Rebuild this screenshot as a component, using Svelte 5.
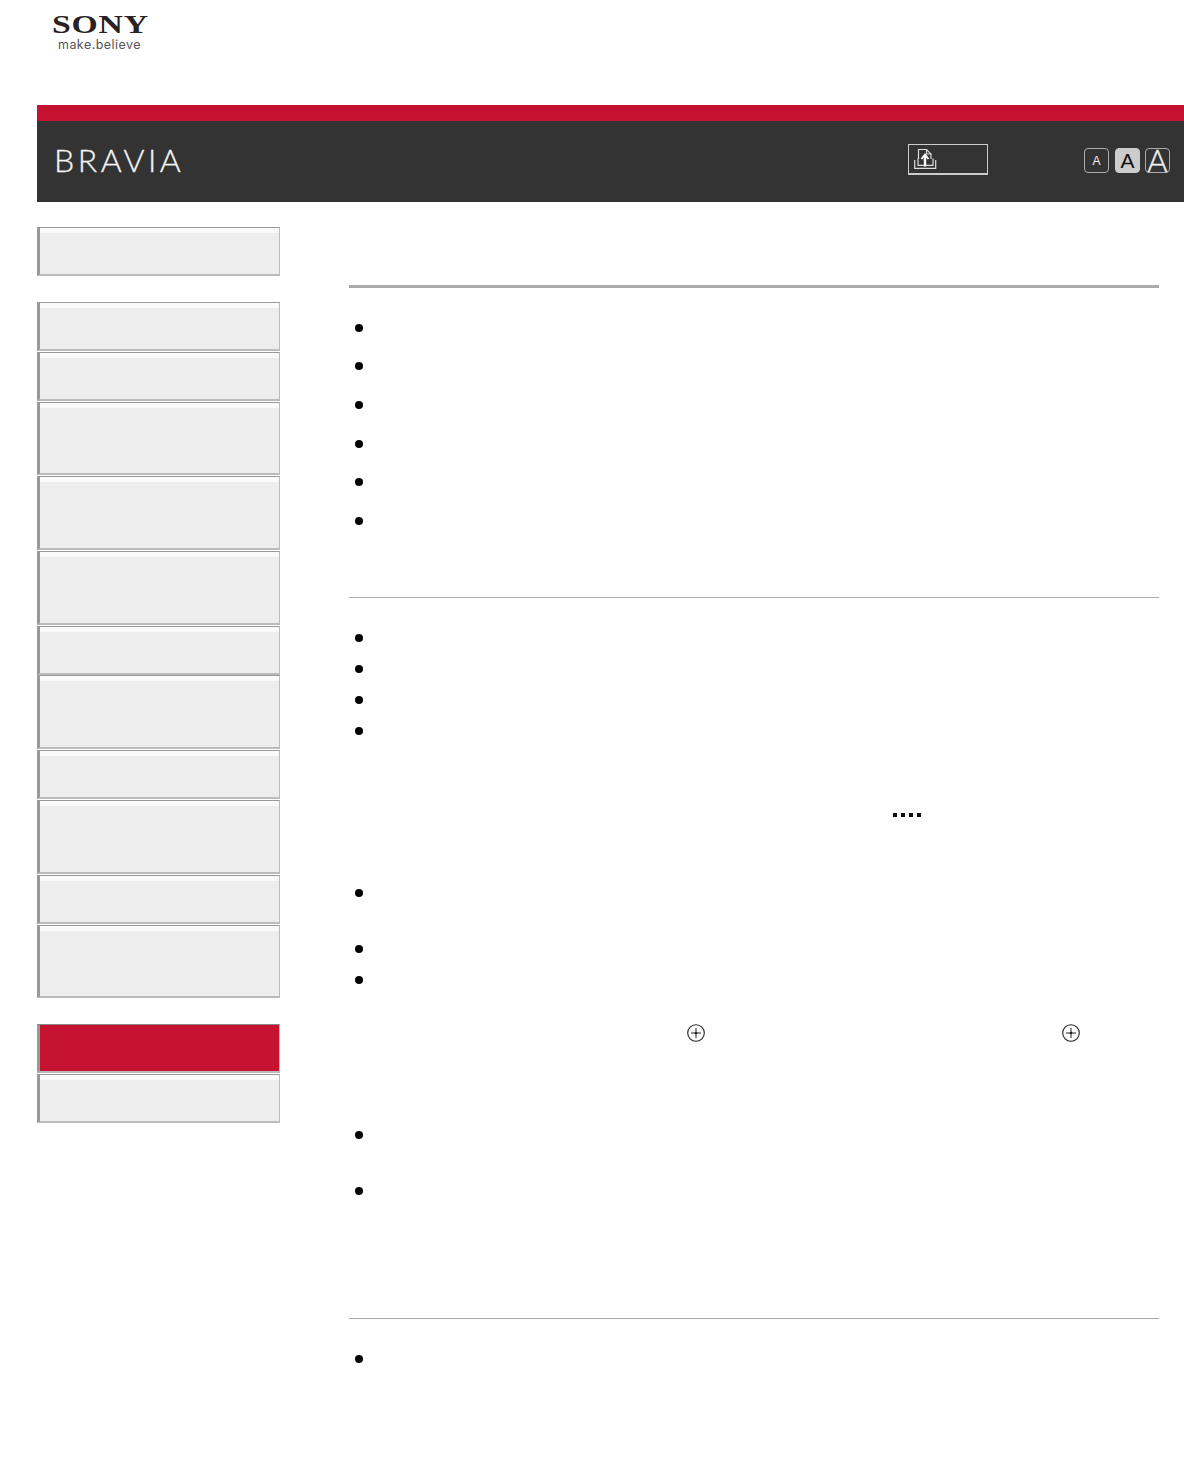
<script>
  const groups = [
    [49],
    [49, 49, 74, 74, 74, 49, 74, 49, 74, 49, 74],
    [49, 49]
  ];
</script>

<div class="page">
  <div class="logo">
    <div class="sony">SONY</div>
    <div class="tag">make.believe</div>
  </div>

  <header class="head">
    <div class="stripe"></div>
    <div class="bar">
      <div class="brand">BRAVIA</div>
      <div class="share">
        <svg width="23" height="22" viewBox="0 0 23 22" fill="none" stroke="#ddd" stroke-width="1.2">
          <path d="M4.5 11V1.5h8l4.5 4.5v5" />
          <path d="M12.5 1.5V6H17" />
          <path d="M.7 12v8.3h21V12" />
          <path d="M4 10.5v6.8h15v-6.8" />
          <path d="M11 18.5V8" stroke-width="2.4" stroke="#fff" />
          <path d="M7.5 11l3.5-4.5 3.5 4.5" stroke-width="1.8" stroke="#fff" />
        </svg>
      </div>
      <div class="sizes">
        <span class="size s">A</span>
        <span class="size m">A</span>
        <span class="size l">A</span>
      </div>
    </div>
  </header>

  <div class="body">
    <nav class="side">
      {#each groups as g, gi}
        <div class="group">
          {#each g as h, i}
            <div class="item" class:tall={h === 74} class:active={gi === 2 && i === 0}></div>
          {/each}
        </div>
      {/each}
    </nav>

    <main class="main">
      <div class="rule thick first"></div>
      <ul class="list wide">
        {#each Array(6) as _}<li>&nbsp;</li>{/each}
      </ul>
      <div class="rule second"></div>
      <ul class="list narrow">
        {#each Array(4) as _}<li>&nbsp;</li>{/each}
      </ul>
      <div class="dots"><i></i><i></i><i></i><i></i></div>
      <ul class="list trio">
        <li class="double">&nbsp;</li>
        <li>&nbsp;</li>
        <li>&nbsp;</li>
      </ul>
      <div class="targets">
        <svg width="20" height="20" viewBox="0 0 20 20" fill="none" stroke="#222">
          <circle cx="10" cy="10" r="8.3" stroke-width="1.1" />
          <path d="M5 10h10M10 5v10" stroke-width="1" />
          <circle cx="10" cy="10" r="1.3" fill="#222" stroke="none" />
        </svg>
        <svg width="20" height="20" viewBox="0 0 20 20" fill="none" stroke="#222">
          <circle cx="10" cy="10" r="8.3" stroke-width="1.1" />
          <path d="M5 10h10M10 5v10" stroke-width="1" />
          <circle cx="10" cy="10" r="1.3" fill="#222" stroke="none" />
        </svg>
      </div>
      <ul class="list pair">
        <li class="double">&nbsp;</li>
        <li>&nbsp;</li>
      </ul>
      <div class="rule third"></div>
      <ul class="list last">
        <li>&nbsp;</li>
      </ul>
    </main>
  </div>
</div>

<style>
  :global(body) {
    margin: 0;
    background: #fff;
  }
  .page {
    width: 1184px;
    height: 1459px;
    overflow: hidden;
    font-family: "Liberation Sans", Arial, sans-serif;
  }
  .logo {
    height: 105px;
    padding-left: 52px;
    box-sizing: border-box;
  }
  .sony {
    padding-top: 11px;
    font: bold 27px/28px "Liberation Serif", serif;
    letter-spacing: 0.6px;
    color: #2a2222;
    transform: scale(1.25, 0.95);
    transform-origin: 0 60%;
  }
  .tag {
    margin: -1px 0 0 6px;
    font: 12.5px/14px Inter, "Liberation Sans", sans-serif;
    letter-spacing: 0.45px;
    color: #555;
  }
  .head {
    margin-left: 37px;
  }
  .stripe {
    height: 16px;
    background: #c41230;
  }
  .bar {
    height: 81px;
    background: #333;
    display: flex;
    align-items: center;
    padding-left: 17px;
    padding-bottom: 4px;
    box-sizing: border-box;
  }
  .brand {
    width: 854px;
    font: 300 32px/38px Lato, "Open Sans", sans-serif;
    letter-spacing: 3.5px;
    color: #f4f4f4;
    -webkit-text-stroke: 0.3px #f4f4f4;
  }
  .share {
    width: 73px;
    height: 28px;
    border: 1px solid #ccc;
    border-bottom-width: 2px;
    display: flex;
    align-items: center;
    padding-left: 5px;
    margin-right: 96px;
  }
  .sizes {
    display: flex;
    gap: 6px;
    margin-top: 2px;
  }
  .size {
    width: 25px;
    height: 25px;
    box-sizing: border-box;
    border: 1px solid #aaa;
    border-radius: 4px;
    color: #eee;
    display: flex;
    align-items: center;
    justify-content: center;
    font-family: "Liberation Sans", sans-serif;
  }
  .s { font-size: 12px; }
  .m {
    font-size: 21px;
    background: #ccc;
    border-color: #ccc;
    color: #111;
  }
  .l {
    margin-left: -1px;
    font: 300 31px/1 Lato, sans-serif;
    -webkit-text-stroke: 0.4px #eee;
  }

  .body {
    display: flex;
    margin-left: 37px;
  }
  .side {
    width: 243px;
    padding-top: 25px;
    flex: none;
  }
  .group {
    margin-bottom: 26px;
  }
  .item {
    height: 48.9px;
    box-sizing: border-box;
    border-style: solid;
    border-color: #999 #bbb #bbb #999;
    border-width: 1px 1px 2px 3px;
    background: linear-gradient(#fafafa 0 5px, #ededed 5px);
    margin-bottom: 0.95px;
  }
  .item.tall {
    height: 73.77px;
  }
  .item.active {
    background: #c41230;
    border-top-color: #888;
  }
  .main {
    margin-left: 69px;
    width: 810px;
  }
  .rule {
    height: 1px;
    background: #aaa;
  }
  .thick {
    height: 3px;
  }
  .first {
    margin-top: 83px;
  }
  .list {
    margin: 0;
    padding: 0 0 0 29px;
    list-style: disc;
    font-size: 28px;
    line-height: 20px;
    box-sizing: border-box;
  }
  .list li {
    height: 20px;
  }
  .wide {
    padding-top: 28.8px;
    height: 309px;
  }
  .wide li {
    height: 38.6px;
  }
  .narrow {
    padding-top: 29px;
    height: 215px;
  }
  .narrow li {
    height: 31px;
  }
  .dots {
    display: flex;
    gap: 4px;
    padding-left: 544px;
    height: 4px;
  }
  .dots i {
    width: 4px;
    height: 4px;
    background: #111;
  }
  .trio {
    padding-top: 65px;
    height: 165px;
  }
  .trio li {
    height: 31px;
  }
  .trio li.double {
    height: 56px;
  }
  .targets {
    display: flex;
    gap: 355px;
    padding-left: 337px;
    height: 20px;
    margin-top: 41px;
  }
  .pair {
    padding-top: 81px;
    height: 275px;
  }
  .pair li.double {
    height: 56px;
  }
  .last {
    padding-top: 29px;
  }
</style>
